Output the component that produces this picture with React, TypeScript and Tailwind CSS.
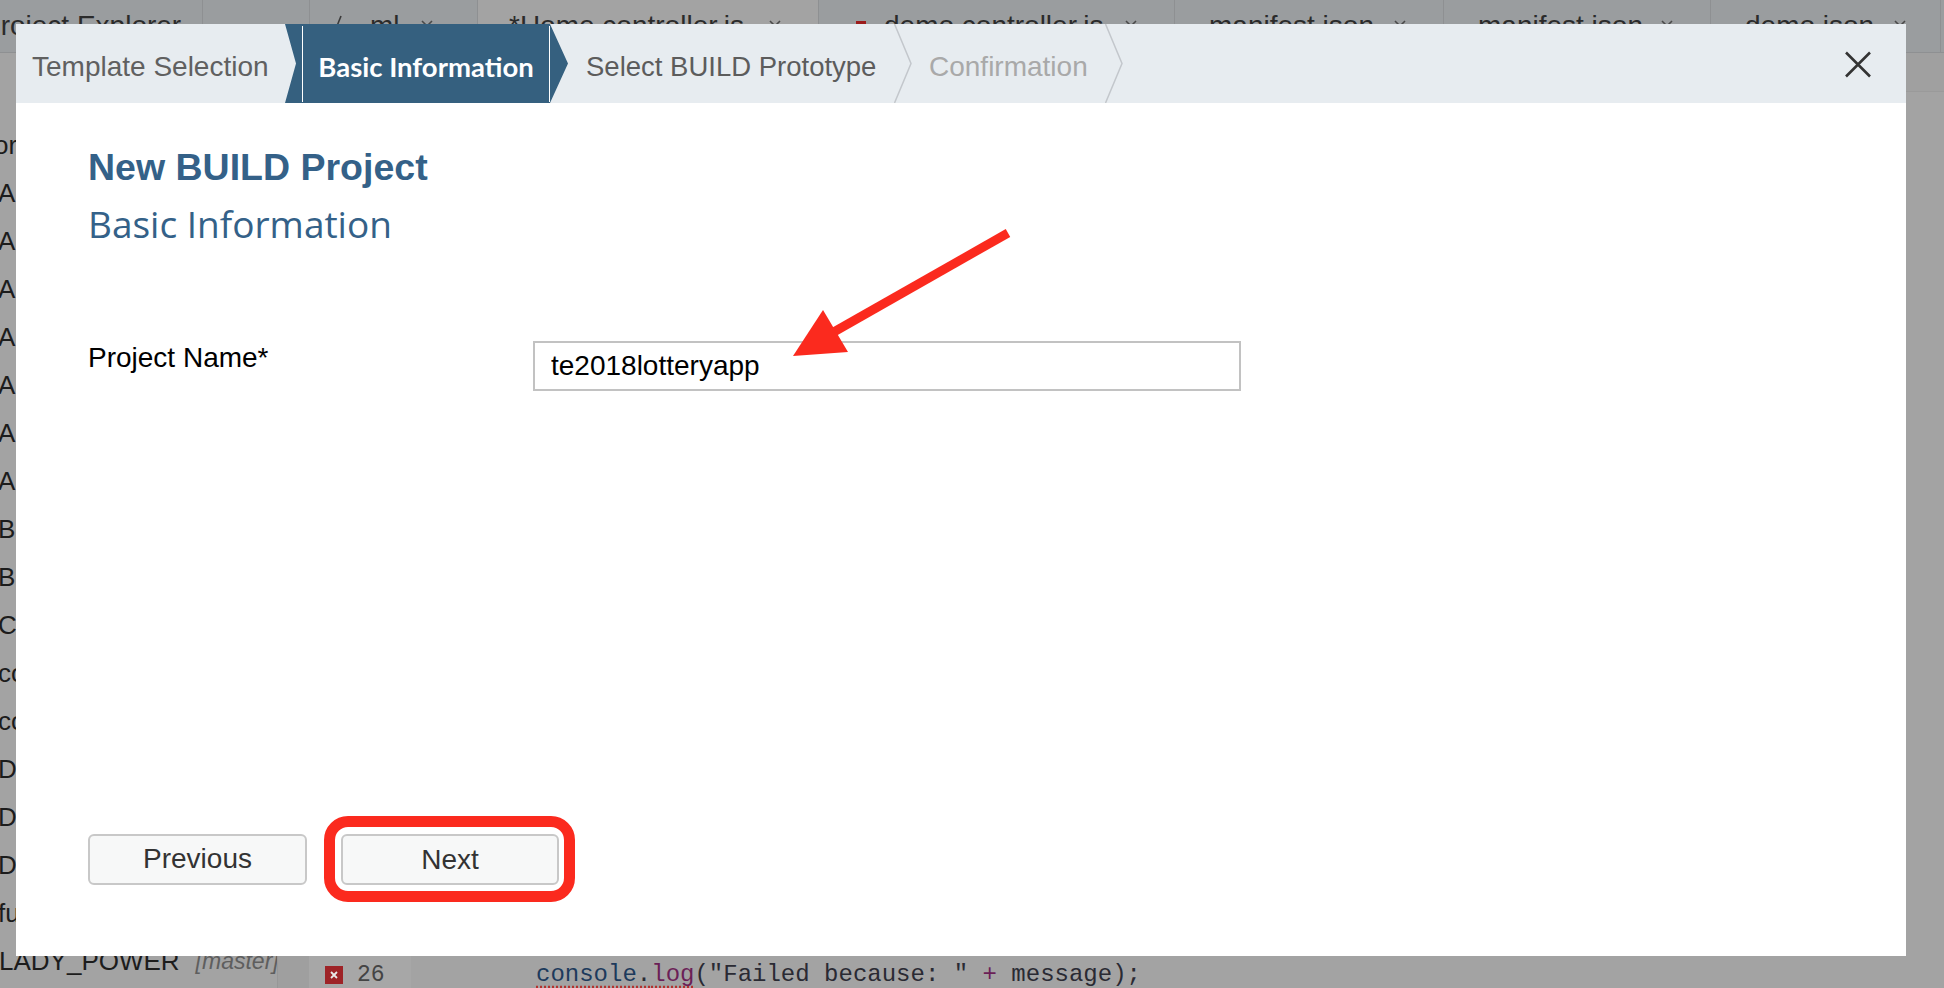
import type { ReactNode } from "react";

const explorerRows = [
  { name: "orkspace", shift: "-ml-[6px]" },
  { name: "AI_Demo" },
  { name: "Ar_Lottery" },
  { name: "AI_Service" },
  { name: "Approuter" },
  { name: "Ar_Test" },
  { name: "AI_Util" },
  { name: "Ar_View" },
  { name: "Bi_App" },
  { name: "Br_Test" },
  { name: "CloudApp" },
  { name: "com.sap.demo" },
  { name: "com.sap.lottery" },
  { name: "DemoApp" },
  { name: "DemoBuild" },
  { name: "DemoService" },
  { name: "fullstack" },
];

function TabClose() {
  return (
    <svg width="14" height="14" viewBox="0 0 14 14" className="shrink-0">
      <path d="M2 2 L12 12 M12 2 L2 12" stroke="#4a4a4a" strokeWidth="1.6" />
    </svg>
  );
}

function EditorTab({
  children,
  width,
  pl,
  pr = "pr-[36px]",
  active,
}: {
  children: ReactNode;
  width: string;
  pl: string;
  pr?: string;
  active?: boolean;
}) {
  return (
    <div
      className={`flex h-full shrink-0 items-center border-r border-[#8e9092] ${width} ${pl} ${pr} ${
        active ? "bg-[#a3a3a3]" : ""
      }`}
    >
      <div className="flex min-w-0 items-center gap-[10px] whitespace-nowrap">{children}</div>
      <div className="ml-auto">
        <TabClose />
      </div>
    </div>
  );
}

function StepSeparator() {
  return (
    <svg width="18" height="79" viewBox="0 0 18 79" className="shrink-0">
      <polyline points="0.5,0 17,39.5 0.5,79" fill="none" stroke="#c3c7cc" strokeWidth="1.5" />
    </svg>
  );
}

export default function App() {
  return (
    <div className="relative flex h-[988px] w-[1944px] flex-col overflow-hidden bg-[#a3a3a3] font-['Liberation_Sans',Arial,sans-serif]">
      {/* IDE in the background, dimmed */}
      <div className="flex h-[53px] shrink-0 items-center border-b border-[#8e9092] bg-[#9a9d9f] text-[28px] text-[#2b2b2b]">
        <div className="flex h-full w-[203px] shrink-0 items-center overflow-hidden border-r border-[#8e9092]">
          <span className="-ml-[18px] whitespace-nowrap">Project Explorer</span>
        </div>
        <div className="h-full w-[107px] shrink-0 border-r border-[#8e9092]" />
        <EditorTab width="w-[168px]" pl="pl-[22px]" pr="pr-[43px]">
          <svg width="10" height="24" viewBox="0 0 10 24">
            <path d="M1 22 L9 2" stroke="#3a3a3a" strokeWidth="1.6" />
          </svg>
          <span className="ml-[18px]">ml</span>
        </EditorTab>
        <EditorTab width="w-[341px]" pl="pl-[31px]" active>
          <span>*Home.controller.js</span>
        </EditorTab>
        <EditorTab width="w-[356px]" pl="pl-[37px]">
          <span className="h-[10px] w-[10px] bg-[#9c1c1c]" />
          <span className="ml-[8px]">demo.controller.js</span>
        </EditorTab>
        <EditorTab width="w-[269px]" pl="pl-[34px]">
          <span>manifest.json</span>
        </EditorTab>
        <EditorTab width="w-[267px]" pl="pl-[34px]">
          <span>manifest.json</span>
        </EditorTab>
        <EditorTab width="w-[230px]" pl="pl-[34px]" pr="pr-[33px]">
          <span>demo.json</span>
        </EditorTab>
      </div>

      <div className="flex min-h-0 flex-1">
        <div className="flex w-[277px] shrink-0 flex-col overflow-hidden pt-[68px] text-[26px] text-[#1c1c1c]">
          {explorerRows.map((row) => (
            <div key={row.name} className="flex h-[48px] shrink-0 items-center whitespace-nowrap">
              <span className={row.shift ?? "-ml-[2px]"}>{row.name}</span>
            </div>
          ))}
          <div className="flex h-[48px] shrink-0 items-center gap-[16px] whitespace-nowrap">
            <span className="-ml-[1px]">LADY_POWER</span>
            <span className="text-[23px] italic text-[#5e5e5e]">[master]</span>
          </div>
        </div>

        <div className="flex min-w-0 flex-1 flex-col">
          <div className="h-[39px] shrink-0 border-b border-[#9a9a9a] bg-[#a0a0a0]" />
          <div className="flex min-h-0 flex-1">
            <div className="w-[32px] shrink-0 border-l border-[#979797] bg-[#9f9f9f]" />
            <div className="flex w-[102px] shrink-0 flex-col justify-end bg-[#a7a7a7]">
              <div className="-mb-[5px] flex h-[36px] items-center gap-[14px] pl-[16px]">
                <span className="flex h-[18px] w-[18px] items-center justify-center bg-[#9e2327]">
                  <svg width="10" height="10" viewBox="0 0 10 10">
                    <path d="M2 2 L8 8 M8 2 L2 8" stroke="#e8e8e8" strokeWidth="1.8" />
                  </svg>
                </span>
                <span className="font-['Liberation_Mono',monospace] text-[23px] text-[#444]">26</span>
              </div>
            </div>
            <div className="flex min-w-0 flex-1 flex-col justify-end">
              <div className="-mb-[5px] flex h-[36px] items-center whitespace-nowrap pl-[125px] font-['Liberation_Mono',monospace] text-[24px] text-[#2a2a33]">
                <span className="underline decoration-[#b3322e] decoration-dotted underline-offset-[5px]">
                  <span className="text-[#1d3a5c]">console</span>.<span className="text-[#6b1f57]">log</span>
                </span>
                <span>("Failed because: "</span>
                <span className="text-[#6b1f57]">&nbsp;+&nbsp;</span>
                <span>message);</span>
              </div>
            </div>
          </div>
        </div>
      </div>

      {/* Wizard dialog */}
      <div className="absolute left-[16px] top-[24px] flex h-[932px] w-[1890px] flex-col bg-white">
        <div className="flex h-[79px] shrink-0 items-center bg-[#e7ecf0] text-[28px]">
          <div className="flex h-full w-[269px] shrink-0 items-center pl-[16px] text-[#606060]">
            <span className="mt-[6px] whitespace-nowrap">Template Selection</span>
          </div>
          <div className="flex h-full w-[283px] shrink-0 items-center bg-[#35607f] [clip-path:polygon(0_0,265px_0,100%_50%,265px_100%,0_100%,11px_50%)]">
            <div className="ml-[17px] flex h-[76px] w-[248px] items-center justify-center border-x border-white">
              <span className="mt-[6px] whitespace-nowrap font-['Lato',sans-serif] text-[27.5px] font-bold text-white">
                Basic Information
              </span>
            </div>
          </div>
          <div className="flex h-full w-[326px] shrink-0 items-center pl-[18px] text-[27.5px] text-[#5c5c5c]">
            <span className="mt-[6px] whitespace-nowrap">Select BUILD Prototype</span>
          </div>
          <StepSeparator />
          <div className="flex h-full w-[193px] shrink-0 items-center pl-[17px] text-[#a9a9a9]">
            <span className="mt-[6px] whitespace-nowrap">Confirmation</span>
          </div>
          <StepSeparator />
          <div className="flex-1" />
          <svg width="28" height="27" viewBox="0 0 28 27" className="mr-[34px] mt-[2px] shrink-0">
            <path d="M2 1.5 L26 25.5 M26 1.5 L2 25.5" stroke="#333" strokeWidth="2.6" />
          </svg>
        </div>

        <div className="flex min-h-0 flex-1 flex-col px-[72px] pb-[54px] pt-[42px]">
          <h1 className="text-[37.5px] font-bold leading-[44px] text-[#346188]">New BUILD Project</h1>
          <h2 className="mt-[10px] font-['Open_Sans',sans-serif] text-[37px] leading-[50px] text-[#346188]">
            Basic Information
          </h2>

          <div className="mt-[92px] flex items-start">
            <label className="mt-[1px] w-[445px] shrink-0 text-[28px] leading-[32px] text-black">Project Name*</label>
            <input
              readOnly
              value="te2018lotteryapp"
              className="h-[50px] w-[708px] border-2 border-[#c2c2c2] bg-white px-[16px] text-[28px] text-black outline-none"
            />
          </div>

          <div className="mt-auto flex items-center gap-[17px]">
            <button className="h-[51px] w-[219px] rounded-[6px] border-2 border-[#c8c8c8] bg-[#f7f8f8] text-[28px] text-[#333]">
              Previous
            </button>
            <div className="rounded-[24px] border-[11px] border-[#fb2a1e] pb-[6px] pl-[6px] pr-[5px] pt-[7px]">
              <button className="h-[51px] w-[218px] rounded-[6px] border-2 border-[#c8c8c8] bg-[#f7f8f8] text-[28px] text-[#333]">
                Next
              </button>
            </div>
          </div>
        </div>
      </div>

      {/* Annotation arrow */}
      <svg
        width="240"
        height="150"
        viewBox="0 0 240 150"
        className="absolute left-[780px] top-[220px]"
      >
        <line x1="228" y1="13" x2="52" y2="113" stroke="#fb2a1e" strokeWidth="9" />
        <polygon points="43,90 13,136 68,132" fill="#fb2a1e" />
      </svg>
    </div>
  );
}
